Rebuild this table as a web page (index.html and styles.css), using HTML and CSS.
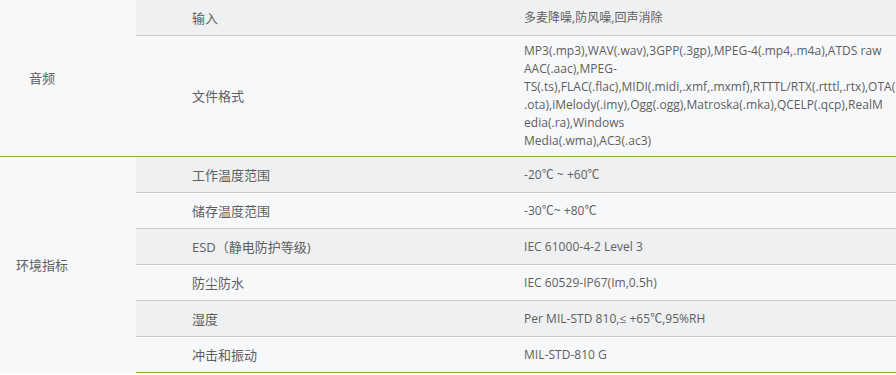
FILE: index.html
```html
<!DOCTYPE html>
<html lang="zh-CN">
<head>
<meta charset="utf-8">
<title>规格参数</title>
<link rel="stylesheet" href="styles.css">
</head>
<body>
<table class="spec">
  <colgroup>
    <col class="c-group">
    <col class="c-name">
    <col class="c-value">
  </colgroup>
  <tbody class="grp">
    <tr class="odd">
      <td class="group" rowspan="2">音频</td>
      <td class="name">输入</td>
      <td class="value">多麦降噪,防风噪,回声消除</td>
    </tr>
    <tr class="even last">
      <td class="name">文件格式</td>
      <td class="value multi">MP3(.mp3),WAV(.wav),3GPP(.3gp),MPEG-4(.mp4,.m4a),ATDS raw<br>AAC(.aac),MPEG-<br>TS(.ts),FLAC(.flac),MIDI(.midi,.xmf,.mxmf),RTTTL/RTX(.rtttl,.rtx),OTA(<br>.ota),iMelody(.imy),Ogg(.ogg),Matroska(.mka),QCELP(.qcp),RealM<br>edia(.ra),Windows<br>Media(.wma),AC3(.ac3)</td>
    </tr>
  </tbody>
  <tbody class="grp">
    <tr class="odd">
      <td class="group open" rowspan="6">环境指标</td>
      <td class="name">工作温度范围</td>
      <td class="value">-20℃ ~ +60℃</td>
    </tr>
    <tr class="even">
      <td class="name">储存温度范围</td>
      <td class="value">-30℃~ +80℃</td>
    </tr>
    <tr class="odd">
      <td class="name">ESD（静电防护等级)</td>
      <td class="value">IEC 61000-4-2 Level 3</td>
    </tr>
    <tr class="even">
      <td class="name">防尘防水</td>
      <td class="value">IEC 60529-IP67(Im,0.5h)</td>
    </tr>
    <tr class="odd">
      <td class="name">湿度</td>
      <td class="value">Per MIL-STD 810,≤ +65℃,95%RH</td>
    </tr>
    <tr class="even last">
      <td class="name">冲击和振动</td>
      <td class="value">MIL-STD-810 G</td>
    </tr>
  </tbody>
</table>
</body>
</html>
```
FILE: styles.css
```css
html, body {
  margin: 0;
  padding: 0;
  background: #ffffff;
}

body {
  font-family: "Open Sans", "Noto Sans CJK SC", sans-serif;
  font-size: 12px;
  color: #5e5e5e;
}

.spec {
  width: 896px;
  border-collapse: collapse;
  table-layout: fixed;
}

.c-group { width: 136px; }
.c-name { width: 332px; }
.c-value { width: 428px; }

.spec td {
  padding: 0;
  height: 35px;
  vertical-align: middle;
  border-bottom: 1px solid #c9c9c9;
  line-height: 18px;
}

.spec .group {
  background: #f7f8fa;
  text-align: center;
  padding-right: 52px;
  border-bottom: 1px solid #8fab45;
  font-size: 13px;
}

.spec .group.open {
  border-bottom-color: #f7f8fa;
}

.spec .name {
  padding-left: 56px;
  font-size: 13px;
}

.spec .value {
  padding-left: 56px;
  white-space: nowrap;
  letter-spacing: 0.03px;
}

.spec .value.multi {
  padding-top: 6px;
  padding-bottom: 6px;
}

.spec tr.odd td.name,
.spec tr.odd td.value {
  background: #eff0f2;
}

.spec tr.even td.name,
.spec tr.even td.value {
  background: #f7f8fa;
}

.spec tr.last td.name,
.spec tr.last td.value {
  border-bottom: 1px solid #8fab45;
}
```
